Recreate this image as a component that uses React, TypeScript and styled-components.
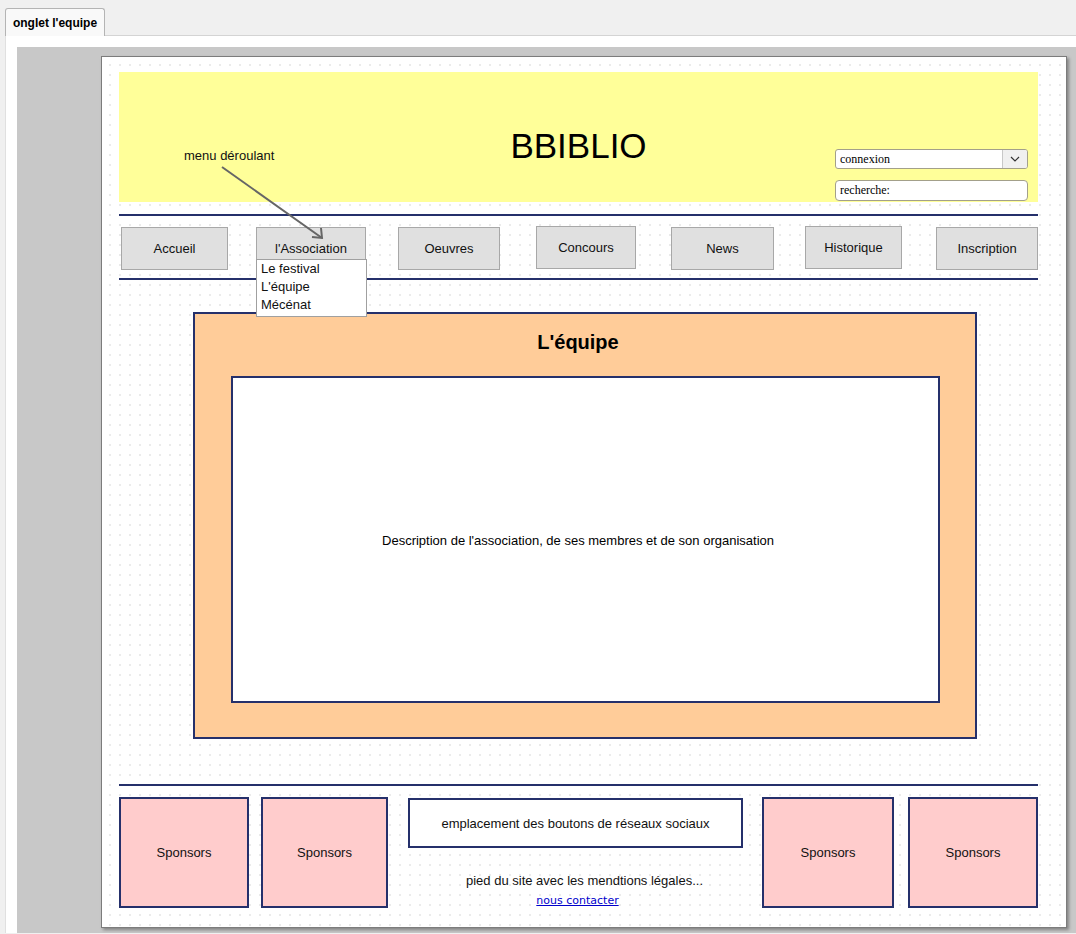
import React from "react";
import styled, { createGlobalStyle } from "styled-components";

const navy = "#25306b";

const Global = createGlobalStyle`
  html, body { margin: 0; padding: 0; }
  body {
    background: #f0f0f0;
    font-family: "Liberation Sans", Arial, sans-serif;
    color: #000;
    overflow: hidden;
  }
`;

const TabBar = styled.div`
  display: flex;
  align-items: flex-end;
  height: 35px;
  padding-left: 5px;
  box-sizing: border-box;
`;

const Tab = styled.div`
  width: 100px;
  height: 28px;
  box-sizing: border-box;
  border: 1px solid #b4b4b4;
  border-bottom: none;
  border-radius: 3px 3px 0 0;
  background: #f9f9f9;
  font-weight: bold;
  font-size: 12px;
  display: flex;
  align-items: center;
  justify-content: center;
  margin-bottom: -1px;
  position: relative;
  z-index: 1;
`;

const Panel = styled.div`
  margin-left: 5px;
  background: #fff;
  border-top: 1px solid #d4d4d4;
  border-left: 1px solid #e0e0e0;
  padding: 11px 0 0 11px;
  height: calc(100vh - 36px);
  box-sizing: border-box;
`;

const Stage = styled.div`
  background: #c8c8c8;
  height: 100%;
  padding: 9px 0 0 84px;
  box-sizing: border-box;
`;

const Canvas = styled.div`
  position: relative;
  width: 966px;
  height: 872px;
  box-sizing: border-box;
  border: 1px solid #7c7c7c;
  box-shadow: 2px 2px 3px rgba(0, 0, 0, 0.35);
  background-color: #fff;
  background-image: radial-gradient(circle, #ebebeb 0.9px, transparent 1.1px);
  background-size: 10px 10px;
  background-position: 3px 3px;
  padding: 15px 0 0 17px;
`;

const Content = styled.div`
  width: 919px;
  display: flex;
  flex-direction: column;
`;

const Header = styled.header`
  height: 130px;
  background: #ffff99;
  display: grid;
  grid-template-columns: 1fr auto 1fr;
`;

const Title = styled.h1`
  grid-column: 2;
  margin: 0;
  align-self: center;
  padding-top: 17px;
  font-weight: normal;
  font-size: 35px;
  line-height: 40px;
`;

const Controls = styled.div`
  grid-column: 3;
  justify-self: end;
  align-self: end;
  display: flex;
  flex-direction: column;
  gap: 11px;
  padding: 0 10px 1px 0;
`;

const Select = styled.div`
  width: 193px;
  height: 20px;
  box-sizing: border-box;
  border: 1px solid #a3a08a;
  border-radius: 3px;
  background: #fff;
  display: flex;
  font-family: "Liberation Serif", "Times New Roman", serif;
  font-size: 12px;
`;

const SelectText = styled.span`
  flex: 1;
  padding-left: 4px;
  line-height: 18px;
`;

const SelectButton = styled.span`
  width: 24px;
  border-left: 1px solid #c8c8c8;
  background: #f0f0f0;
  border-radius: 0 2px 2px 0;
  display: flex;
  align-items: center;
  justify-content: center;
`;

const Input = styled.div`
  width: 193px;
  height: 21px;
  box-sizing: border-box;
  border: 1px solid #a3a08a;
  border-radius: 4px;
  background: #fff;
  font-family: "Liberation Serif", "Times New Roman", serif;
  font-size: 12px;
  padding-left: 4px;
  line-height: 19px;
`;

const Rule = styled.div<{ $top: number }>`
  height: 2px;
  background: ${navy};
  margin-top: ${(p) => p.$top}px;
`;

const Nav = styled.nav`
  display: flex;
  margin-top: 11px;
  height: 43px;
`;

const NavItem = styled.div<{ $w: number; $ml: number; $raise?: boolean }>`
  position: relative;
  width: ${(p) => p.$w}px;
  height: 43px;
  margin-left: ${(p) => p.$ml}px;
  margin-top: ${(p) => (p.$raise ? -1 : 0)}px;
  box-sizing: border-box;
  background: #e0e0e0;
  border: 1px solid #a8a8a8;
  display: flex;
  align-items: center;
  justify-content: center;
  font-size: 13px;
  color: #111;
`;

const Dropdown = styled.div`
  position: absolute;
  left: -1px;
  top: 31px;
  width: 111px;
  box-sizing: border-box;
  background: #fff;
  border: 1px solid #a0a0a0;
  padding: 0 0 2px 4px;
  z-index: 2;
`;

const DropItem = styled.div`
  font-size: 13px;
  line-height: 18px;
  color: #111;
`;

const Main = styled.section`
  margin: 32px 0 0 74px;
  width: 784px;
  height: 427px;
  box-sizing: border-box;
  background: #ffcc99;
  border: 2px solid ${navy};
  display: flex;
  flex-direction: column;
  padding: 0 35px 0 36px;
`;

const MainTitle = styled.h2`
  margin: 0;
  height: 62px;
  font-size: 20px;
  line-height: 20px;
  padding: 18px 15px 0 0;
  box-sizing: border-box;
  text-align: center;
  font-weight: bold;
`;

const MainBody = styled.div`
  height: 327px;
  box-sizing: border-box;
  background: #fff;
  border: 2px solid ${navy};
  display: flex;
  align-items: center;
  justify-content: center;
  font-size: 13px;
  padding: 2px 15px 0 0;
`;

const Footer = styled.footer`
  display: flex;
  margin-top: 11px;
  height: 111px;
`;

const FooterCell = styled.div<{ $w: number; $ml: number }>`
  width: ${(p) => p.$w}px;
  margin-left: ${(p) => p.$ml}px;
  flex: none;
`;

const Sponsor = styled.div`
  box-sizing: border-box;
  height: 111px;
  background: #ffcccc;
  border: 2px solid ${navy};
  display: flex;
  align-items: center;
  justify-content: center;
  font-size: 13px;
  color: #111;
`;

const FooterMiddle = styled.div`
  display: flex;
  flex-direction: column;
  align-items: center;
  padding-top: 1px;
`;

const Social = styled.div`
  width: 335px;
  height: 50px;
  box-sizing: border-box;
  background: #fff;
  border: 2px solid ${navy};
  display: flex;
  align-items: center;
  justify-content: center;
  font-size: 13px;
  color: #111;
`;

const Legal = styled.div`
  margin-top: 25px;
  font-size: 13px;
  color: #111;
  padding-left: 18px;
`;

const Contact = styled.a`
  margin-top: 6px;
  font-family: "DejaVu Sans", sans-serif;
  font-size: 11px;
  color: #0000cc;
  text-decoration: underline;
  padding-left: 4px;
`;

const Note = styled.div`
  position: absolute;
  left: 82px;
  top: 91px;
  font-size: 13px;
  color: #111;
`;

const NoteArrow = styled.svg`
  position: absolute;
  left: 113px;
  top: 103px;
  overflow: visible;
  z-index: 3;
`;

export default function App() {
  const items: { label: string; w: number; ml: number; raise?: boolean; menu?: string[] }[] = [
    { label: "Accueil", w: 107, ml: 2 },
    { label: "l'Association", w: 110, ml: 28, menu: ["Le festival", "L'équipe", "Mécénat"] },
    { label: "Oeuvres", w: 102, ml: 32 },
    { label: "Concours", w: 100, ml: 36, raise: true },
    { label: "News", w: 103, ml: 35 },
    { label: "Historique", w: 97, ml: 31, raise: true },
    { label: "Inscription", w: 102, ml: 34 },
  ];

  return (
    <>
      <Global />
      <TabBar>
        <Tab>onglet l'equipe</Tab>
      </TabBar>
      <Panel>
        <Stage>
          <Canvas>
            <Content>
              <Header>
                <Title>BBIBLIO</Title>
                <Controls>
                  <Select>
                    <SelectText>connexion</SelectText>
                    <SelectButton>
                      <svg width="10" height="6" viewBox="0 0 10 6">
                        <polyline points="1,1 5,5 9,1" fill="none" stroke="#333" strokeWidth="1.2" />
                      </svg>
                    </SelectButton>
                  </Select>
                  <Input>recherche:</Input>
                </Controls>
              </Header>
              <Rule $top={12} />
              <Nav>
                {items.map((it) => (
                  <NavItem key={it.label} $w={it.w} $ml={it.ml} $raise={it.raise}>
                    {it.label}
                    {it.menu && (
                      <Dropdown>
                        {it.menu.map((m) => (
                          <DropItem key={m}>{m}</DropItem>
                        ))}
                      </Dropdown>
                    )}
                  </NavItem>
                ))}
              </Nav>
              <Rule $top={8} />
              <Main>
                <MainTitle>L'équipe</MainTitle>
                <MainBody>Description de l'association, de ses membres et de son organisation</MainBody>
              </Main>
              <Rule $top={45} />
              <Footer>
                <FooterCell $w={130} $ml={0}>
                  <Sponsor>Sponsors</Sponsor>
                </FooterCell>
                <FooterCell $w={127} $ml={12}>
                  <Sponsor>Sponsors</Sponsor>
                </FooterCell>
                <FooterCell $w={335} $ml={20}>
                  <FooterMiddle>
                    <Social>emplacement des boutons de réseaux sociaux</Social>
                    <Legal>pied du site avec les mendtions légales...</Legal>
                    <Contact href="#">nous contacter</Contact>
                  </FooterMiddle>
                </FooterCell>
                <FooterCell $w={132} $ml={19}>
                  <Sponsor>Sponsors</Sponsor>
                </FooterCell>
                <FooterCell $w={130} $ml={14}>
                  <Sponsor>Sponsors</Sponsor>
                </FooterCell>
              </Footer>
            </Content>
            <Note>menu déroulant</Note>
            <NoteArrow width="115" height="85" viewBox="0 0 115 85">
              <line x1="7" y1="7" x2="107" y2="78" stroke="#666" strokeWidth="2" />
              <polyline points="97,77 107,78 106,68" fill="none" stroke="#666" strokeWidth="2" />
            </NoteArrow>
          </Canvas>
        </Stage>
      </Panel>
    </>
  );
}
